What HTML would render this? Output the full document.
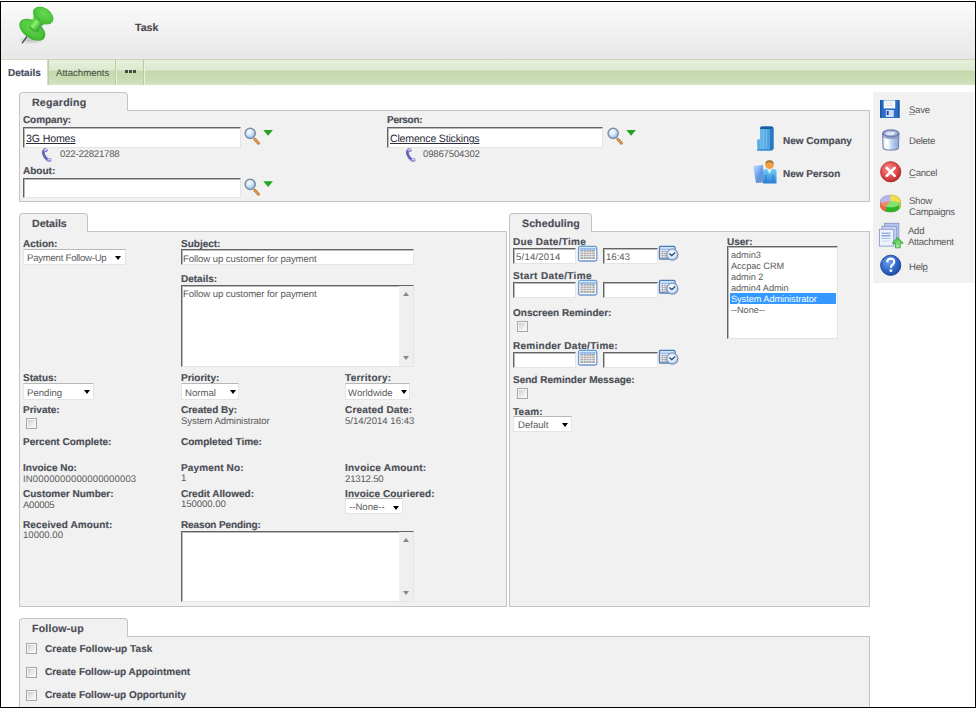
<!DOCTYPE html>
<html><head><meta charset="utf-8">
<style>
html,body{margin:0;padding:0;background:#fff;width:977px;height:710px;overflow:hidden}
body{position:relative;font-family:"Liberation Sans",sans-serif;color:#4b4b4b;text-rendering:geometricPrecision}
.a{position:absolute}
.t{position:absolute;font-size:10px;line-height:10px;white-space:nowrap}
.b{font-weight:bold;color:#4a4d55;-webkit-text-stroke:0.15px #4a4d55}
.v{color:#5a5a5a;font-size:9.6px}
#frame{position:absolute;left:0;top:1px;width:974px;height:705px;border:1px solid #000;z-index:10}
#hdr{position:absolute;left:1px;top:2px;width:974px;height:57px;background:linear-gradient(#fbfbfb,#e7e7e7)}
#tabbar{position:absolute;left:1px;top:59px;width:974px;height:26px;border-top:1px solid #c9d6bb;box-sizing:border-box;
 background:linear-gradient(#e6efdb 0,#dde9cf 40%,#c5d8ad 44%,#c9dcb3 75%,#d3e4c1 100%)}
.ptab{position:absolute;background:#f1f1f1;border:1px solid #c4c4c4;border-bottom:none;border-radius:4px 4px 0 0;box-sizing:border-box}
.panel{position:absolute;background:#f1f1f1;border:1px solid #c4c4c4;box-sizing:border-box}
.pt{position:absolute;font-size:10.6px;line-height:11px;font-weight:bold;color:#4a4d55;white-space:nowrap;-webkit-text-stroke:0.15px #4a4d55}
.inp{position:absolute;background:#fff;box-sizing:border-box;border-top:1px solid #646464;border-left:1px solid #646464;border-right:1px solid #e4e4e4;border-bottom:1px solid #e4e4e4;box-shadow:inset 1px 1px 0 #b8b8b8}
.sel{position:absolute;background:#fff;box-sizing:border-box;border:1px solid #e4e4e4;border-top-color:#b8b8b8}
.arr{position:absolute;width:0;height:0;border-left:3px solid transparent;border-right:3px solid transparent;border-top:4px solid #000}
.rb{font-size:9.6px;letter-spacing:-0.3px;color:#5a5a5a}
.rb u{text-decoration-color:#9a9a9a}
.cb{position:absolute;width:11px;height:11px;box-sizing:border-box;border:1px solid #a6a6a6;background:linear-gradient(135deg,#bfc2c6 0%,#e6e7e9 50%,#fbfbfb 90%);box-shadow:inset 0 0 0 1px #f6f6f6}
</style></head><body>
<div id="frame"></div>
<div id="hdr"></div>
<div id="tabbar"></div>
<!-- pin icon -->
<svg class="a" style="left:10px;top:2px" width="60" height="48" viewBox="0 0 60 48">
 <defs>
  <radialGradient id="psh" cx="0.5" cy="0.5" r="0.5"><stop offset="0" stop-color="#000" stop-opacity="0.22"/><stop offset="1" stop-color="#000" stop-opacity="0"/></radialGradient>
  <linearGradient id="shaft" gradientUnits="userSpaceOnUse" x1="19.5" y1="23.5" x2="27.5" y2="29.5"><stop offset="0" stop-color="#5ccf46"/><stop offset="0.35" stop-color="#88f466"/><stop offset="1" stop-color="#2f9a3a"/></linearGradient>
  <radialGradient id="capt" cx="0.45" cy="0.4" r="0.7"><stop offset="0" stop-color="#66d84f"/><stop offset="1" stop-color="#48bf3a"/></radialGradient>
  <radialGradient id="capb" cx="0.4" cy="0.45" r="0.7"><stop offset="0" stop-color="#62d64c"/><stop offset="1" stop-color="#44bb36"/></radialGradient>
 </defs>
 <ellipse cx="21" cy="38" rx="13" ry="4.5" fill="url(#psh)"/>
 <path d="M17 34.5 L12.3 40.8" stroke="#4a4a55" stroke-width="1.4" stroke-linecap="round"/>
 <ellipse cx="22.3" cy="27.8" rx="14.6" ry="8.8" transform="rotate(35 22.3 27.8)" fill="#40b534"/>
 <ellipse cx="22" cy="27.3" rx="13" ry="7.2" transform="rotate(35 22 27.3)" fill="url(#capb)"/>
 <ellipse cx="24.2" cy="26" rx="6" ry="3.6" transform="rotate(35 24.2 26)" fill="#3fae38" opacity="0.7"/>
 <path d="M27.5 29.8 L19 23.5 Q23 19.5 23.8 12.5 L36 21.5 Q29.5 23.5 27.5 29.8 Z" fill="url(#shaft)"/>
 <ellipse cx="33.2" cy="13.6" rx="11.3" ry="7.6" transform="rotate(35 33.2 13.6)" fill="#46be38"/>
 <ellipse cx="33.8" cy="12.8" rx="9.6" ry="6" transform="rotate(35 33.8 12.8)" fill="url(#capt)"/>
</svg>
<div class="t b" style="left:135px;top:23px;font-size:10.6px;line-height:11px;color:#4a4a4a">Task</div>
<!-- top tabs -->
<div class="a" style="left:1px;top:59px;width:47px;height:26px;background:#fff;border-top:1px solid #d4ddc9;box-sizing:border-box"></div>
<div class="a" style="left:47px;top:59px;width:1px;height:26px;background:#d2dcc6"></div>
<div class="a" style="left:48px;top:60px;width:1px;height:25px;background:#bccda9"></div>
<div class="a" style="left:115px;top:60px;width:1px;height:25px;background:#b9cba5"></div>
<div class="a" style="left:116px;top:60px;width:1px;height:25px;background:#e8f0de"></div>
<div class="a" style="left:143px;top:60px;width:1px;height:25px;background:#b9cba5"></div>
<div class="a" style="left:144px;top:60px;width:1px;height:25px;background:#e8f0de"></div>
<div class="t b" style="left:8px;top:69px;color:#3e4a5e">Details</div>
<div class="t" style="left:56px;top:69px;font-size:9.6px;color:#3f4a3f">Attachments</div>
<div class="a" style="left:125px;top:70px;width:3px;height:3px;background:#474747"></div>
<div class="a" style="left:129px;top:70px;width:3px;height:3px;background:#474747"></div>
<div class="a" style="left:133px;top:70px;width:3px;height:3px;background:#474747"></div>
<!-- ============ REGARDING ============ -->
<div class="panel" style="left:19px;top:110px;width:851px;height:92px"></div>
<div class="ptab" style="left:19px;top:92px;width:109px;height:19px"></div>
<div class="pt" style="left:32px;top:98px;letter-spacing:0.22px">Regarding</div>
<div class="t b" style="left:23px;top:116px;letter-spacing:-0.1px">Company:</div>
<div class="inp" style="left:23px;top:127px;width:218px;height:21px"></div>
<div class="t" style="left:26px;top:134px;font-size:10.6px;color:#2b2b3a;text-decoration:underline;letter-spacing:-0.14px">3G Homes</div>
<div class="t v" style="left:60px;top:150px;letter-spacing:-0.2px">022-22821788</div>
<div class="t b" style="left:23px;top:167px">About:</div>
<div class="inp" style="left:23px;top:178px;width:218px;height:20px"></div>
<div class="t b" style="left:387px;top:116px;letter-spacing:-0.28px">Person:</div>
<div class="inp" style="left:387px;top:127px;width:216px;height:21px"></div>
<div class="t" style="left:390px;top:134px;font-size:10.6px;color:#2b2b3a;text-decoration:underline;letter-spacing:-0.2px">Clemence Stickings</div>
<div class="t v" style="left:423px;top:150px;letter-spacing:-0.18px">09867504302</div>
<div class="t b" style="left:783px;top:137px">New Company</div>
<div class="t b" style="left:783px;top:170px">New Person</div>
<!-- ============ DETAILS ============ -->
<div class="panel" style="left:19px;top:231px;width:488px;height:376px"></div>
<div class="ptab" style="left:19px;top:213px;width:69px;height:19px"></div>
<div class="pt" style="left:32px;top:219px">Details</div>
<div class="t b" style="left:23px;top:240px">Action:</div>
<div class="sel" style="left:23px;top:249px;width:103px;height:16px"></div>
<div class="t v" style="left:27px;top:254px;letter-spacing:-0.25px">Payment Follow-Up</div>
<div class="arr" style="left:115px;top:256px"></div>
<div class="t b" style="left:181px;top:240px">Subject:</div>
<div class="inp" style="left:181px;top:249px;width:233px;height:16px"></div>
<div class="t v" style="left:183px;top:255px;letter-spacing:-0.1px">Follow up customer for payment</div>
<div class="t b" style="left:181px;top:275px">Details:</div>
<div class="inp" style="left:181px;top:285px;width:233px;height:82px"></div>
<div class="a" style="left:399px;top:286px;width:14px;height:80px;background:#efefef"></div>
<div class="t v" style="left:183px;top:290px;letter-spacing:-0.1px">Follow up customer for payment</div>
<div class="t b" style="left:23px;top:374px">Status:</div>
<div class="sel" style="left:23px;top:383px;width:71px;height:17px"></div>
<div class="t v" style="left:27px;top:389px">Pending</div>
<div class="arr" style="left:84px;top:390px"></div>
<div class="t b" style="left:181px;top:374px">Priority:</div>
<div class="sel" style="left:181px;top:383px;width:58px;height:17px"></div>
<div class="t v" style="left:185px;top:389px">Normal</div>
<div class="arr" style="left:230px;top:390px"></div>
<div class="t b" style="left:345px;top:374px;letter-spacing:0.26px">Territory:</div>
<div class="sel" style="left:345px;top:383px;width:65px;height:17px"></div>
<div class="t v" style="left:348px;top:389px">Worldwide</div>
<div class="arr" style="left:401px;top:390px"></div>
<div class="t b" style="left:23px;top:406px">Private:</div>
<div class="cb" style="left:26px;top:418px"></div>
<div class="t b" style="left:181px;top:406px">Created By:</div>
<div class="t v" style="left:181px;top:417px;letter-spacing:-0.1px">System Administrator</div>
<div class="t b" style="left:345px;top:406px;letter-spacing:0.18px">Created Date:</div>
<div class="t v" style="left:345px;top:417px">5/14/2014 16:43</div>
<div class="t b" style="left:23px;top:438px">Percent Complete:</div>
<div class="t b" style="left:181px;top:438px">Completed Time:</div>
<div class="t b" style="left:23px;top:464px">Invoice No:</div>
<div class="t v" style="left:23px;top:475px;letter-spacing:0.11px">IN0000000000000000003</div>
<div class="t b" style="left:181px;top:464px;letter-spacing:0.14px">Payment No:</div>
<div class="t v" style="left:181px;top:474px">1</div>
<div class="t b" style="left:345px;top:464px;letter-spacing:0.23px">Invoice Amount:</div>
<div class="t v" style="left:345px;top:475px;letter-spacing:-0.19px">21312.50</div>
<div class="t b" style="left:23px;top:490px">Customer Number:</div>
<div class="t v" style="left:23px;top:501px;letter-spacing:-0.3px">A00005</div>
<div class="t b" style="left:181px;top:490px">Credit Allowed:</div>
<div class="t v" style="left:181px;top:500px;letter-spacing:-0.07px">150000.00</div>
<div class="t b" style="left:345px;top:490px;letter-spacing:0.1px">Invoice Couriered:</div>
<div class="sel" style="left:345px;top:498px;width:58px;height:16px"></div>
<div class="t v" style="left:349px;top:503px">--None--</div>
<div class="arr" style="left:393px;top:506px"></div>
<div class="t b" style="left:23px;top:521px;letter-spacing:0.12px">Received Amount:</div>
<div class="t v" style="left:23px;top:531px">10000.00</div>
<div class="t b" style="left:181px;top:521px;letter-spacing:-0.13px">Reason Pending:</div>
<div class="inp" style="left:181px;top:531px;width:233px;height:71px"></div>
<div class="a" style="left:399px;top:532px;width:14px;height:69px;background:#efefef"></div>
<!-- ============ SCHEDULING ============ -->
<div class="panel" style="left:509px;top:231px;width:361px;height:376px"></div>
<div class="ptab" style="left:509px;top:213px;width:83px;height:19px"></div>
<div class="pt" style="left:522px;top:219px;letter-spacing:0.08px">Scheduling</div>
<div class="t b" style="left:513px;top:238px;letter-spacing:0.29px">Due Date/Time</div>
<div class="inp" style="left:513px;top:248px;width:63px;height:16px"></div>
<div class="t v" style="left:516px;top:253px;letter-spacing:0.2px">5/14/2014</div>
<div class="inp" style="left:603px;top:248px;width:55px;height:16px"></div>
<div class="t v" style="left:606px;top:253px">16:43</div>
<div class="t b" style="left:513px;top:272px;letter-spacing:0.39px">Start Date/Time</div>
<div class="inp" style="left:513px;top:282px;width:63px;height:16px"></div>
<div class="inp" style="left:603px;top:282px;width:55px;height:16px"></div>
<div class="t b" style="left:513px;top:309px">Onscreen Reminder:</div>
<div class="cb" style="left:517px;top:321px"></div>
<div class="t b" style="left:513px;top:342px;letter-spacing:0.27px">Reminder Date/Time:</div>
<div class="inp" style="left:513px;top:352px;width:63px;height:16px"></div>
<div class="inp" style="left:603px;top:352px;width:55px;height:16px"></div>
<div class="t b" style="left:513px;top:376px">Send Reminder Message:</div>
<div class="cb" style="left:517px;top:388px"></div>
<div class="t b" style="left:513px;top:408px;letter-spacing:0.24px">Team:</div>
<div class="sel" style="left:513px;top:416px;width:59px;height:16px"></div>
<div class="t v" style="left:518px;top:421px">Default</div>
<div class="arr" style="left:562px;top:423px"></div>
<div class="t b" style="left:727px;top:238px">User:</div>
<div class="inp" style="left:727px;top:246px;width:111px;height:93px"></div>
<div class="a" style="left:730px;top:293px;width:106px;height:11px;background:#3399ff"></div>
<div class="t v" style="left:731px;top:250px;line-height:11px;font-size:9.2px;letter-spacing:-0.05px">admin3<br>Accpac CRM<br>admin 2<br>admin4 Admin<br><span style="color:#fff">System Administrator</span><br>--None--</div>
<!-- ============ FOLLOW-UP ============ -->
<div class="panel" style="left:19px;top:636px;width:851px;height:72px"></div>
<div class="ptab" style="left:19px;top:618px;width:109px;height:19px"></div>
<div class="pt" style="left:32px;top:624px;letter-spacing:0.2px">Follow-up</div>
<div class="cb" style="left:26px;top:643px"></div>
<div class="t b" style="left:45px;top:645px;letter-spacing:0.07px">Create Follow-up Task</div>
<div class="cb" style="left:26px;top:667px"></div>
<div class="t b" style="left:45px;top:668px">Create Follow-up Appointment</div>
<div class="cb" style="left:26px;top:690px"></div>
<div class="t b" style="left:45px;top:691px">Create Follow-up Opportunity</div>
<!-- ============ ACTION BAR ============ -->
<div class="a" style="left:873px;top:92px;width:101px;height:191px;background:#f1f1f1"></div>
<div class="t rb" style="left:909px;top:106px"><u>S</u>ave</div>
<div class="t rb" style="left:909px;top:137px">Delete</div>
<div class="t rb" style="left:909px;top:169px"><u>C</u>ancel</div>
<div class="t rb" style="left:909px;top:196px;line-height:11px">Show<br>Campaigns</div>
<div class="t rb" style="left:908px;top:226px;line-height:11px">Add<br>Attachment</div>
<div class="t rb" style="left:909px;top:263px">Hel<u>p</u></div>
<!-- ============ ICONS ============ -->
<svg width="0" height="0" style="position:absolute">
 <defs>
  <radialGradient id="lens" cx="0.4" cy="0.35" r="0.65"><stop offset="0" stop-color="#ffffff"/><stop offset="0.55" stop-color="#cfe3f7"/><stop offset="1" stop-color="#8db7e3"/></radialGradient>
  <linearGradient id="cbg" x1="0" y1="0" x2="1" y2="1"><stop offset="0" stop-color="#c9cdd2"/><stop offset="1" stop-color="#ffffff"/></linearGradient>
  <linearGradient id="bfront" x1="0" y1="0" x2="1" y2="0"><stop offset="0" stop-color="#69b9ea"/><stop offset="1" stop-color="#4a9fdc"/></linearGradient>
  <linearGradient id="trash" x1="0" y1="0" x2="1" y2="0"><stop offset="0" stop-color="#e8eef8"/><stop offset="0.3" stop-color="#ffffff"/><stop offset="0.6" stop-color="#b4cfee"/><stop offset="1" stop-color="#8aa6d6"/></linearGradient>
  <radialGradient id="redc" cx="0.4" cy="0.35" r="0.7"><stop offset="0" stop-color="#f58a8a"/><stop offset="0.6" stop-color="#e34a4a"/><stop offset="1" stop-color="#b82828"/></radialGradient>
  <radialGradient id="bluec" cx="0.4" cy="0.35" r="0.7"><stop offset="0" stop-color="#6ea0ec"/><stop offset="0.6" stop-color="#2f66cc"/><stop offset="1" stop-color="#1d4a9e"/></radialGradient>
  <radialGradient id="clockg" cx="0.45" cy="0.4" r="0.6"><stop offset="0" stop-color="#ffffff"/><stop offset="0.7" stop-color="#cfe6fa"/><stop offset="1" stop-color="#8fb2dc"/></radialGradient>
  <linearGradient id="body" x1="0" y1="0" x2="0" y2="1"><stop offset="0" stop-color="#70d0f8"/><stop offset="1" stop-color="#2c7fd8"/></linearGradient>
  <linearGradient id="mon" x1="0" y1="0" x2="1" y2="1"><stop offset="0" stop-color="#cfe4fb"/><stop offset="0.6" stop-color="#5d94e6"/><stop offset="1" stop-color="#8a9ab0"/></linearGradient>
  <linearGradient id="arrg" x1="0" y1="0" x2="0" y2="1"><stop offset="0" stop-color="#3fc23a"/><stop offset="1" stop-color="#a6eea0"/></linearGradient>
 </defs>
</svg>
<!-- magnifiers + triangles -->
<svg class="a" style="left:242px;top:125px" width="34" height="22" viewBox="0 0 34 22">
 <line x1="12.8" y1="14.2" x2="16.5" y2="18.3" stroke="#b7772f" stroke-width="2.8" stroke-linecap="round"/>
 <line x1="13" y1="14.4" x2="16.3" y2="18" stroke="#e4a358" stroke-width="1.3" stroke-linecap="round"/>
 <circle cx="8.2" cy="8.3" r="5.1" fill="url(#lens)" stroke="#7d8ea6" stroke-width="1.5"/>
 <polygon points="21.3,5 30.9,5 26.1,10.8" fill="#21a521"/>
</svg>
<svg class="a" style="left:242px;top:176px" width="34" height="22" viewBox="0 0 34 22">
 <line x1="12.8" y1="14.2" x2="16.5" y2="18.3" stroke="#b7772f" stroke-width="2.8" stroke-linecap="round"/>
 <line x1="13" y1="14.4" x2="16.3" y2="18" stroke="#e4a358" stroke-width="1.3" stroke-linecap="round"/>
 <circle cx="8.2" cy="8.3" r="5.1" fill="url(#lens)" stroke="#7d8ea6" stroke-width="1.5"/>
 <polygon points="21.3,5.3 30.9,5.3 26.1,11.1" fill="#21a521"/>
</svg>
<svg class="a" style="left:605px;top:125px" width="34" height="22" viewBox="0 0 34 22">
 <line x1="12.8" y1="14.2" x2="16.5" y2="18.3" stroke="#b7772f" stroke-width="2.8" stroke-linecap="round"/>
 <line x1="13" y1="14.4" x2="16.3" y2="18" stroke="#e4a358" stroke-width="1.3" stroke-linecap="round"/>
 <circle cx="8.2" cy="8.3" r="5.1" fill="url(#lens)" stroke="#7d8ea6" stroke-width="1.5"/>
 <polygon points="21.3,5 30.9,5 26.1,10.8" fill="#21a521"/>
</svg>
<!-- phones -->
<svg class="a" style="left:40px;top:147px" width="14" height="16" viewBox="0 0 14 16">
 <path d="M4.4 3 C2.4 4.6 3 8.8 7.6 12.8" stroke="#6464b4" stroke-width="2.8" fill="none" stroke-linecap="round"/>
 <ellipse cx="5.4" cy="3.2" rx="2.4" ry="2" fill="#8686d2"/>
 <ellipse cx="9.2" cy="13" rx="2.5" ry="2" fill="#9090d8"/>
 <ellipse cx="5.6" cy="2.8" rx="1.2" ry="0.8" fill="#e4e4fa"/>
 <ellipse cx="9.4" cy="12.6" rx="1.3" ry="0.8" fill="#dcdcf6"/>
</svg>
<svg class="a" style="left:404px;top:147px" width="14" height="16" viewBox="0 0 14 16">
 <path d="M4.4 3 C2.4 4.6 3 8.8 7.6 12.8" stroke="#6464b4" stroke-width="2.8" fill="none" stroke-linecap="round"/>
 <ellipse cx="5.4" cy="3.2" rx="2.4" ry="2" fill="#8686d2"/>
 <ellipse cx="9.2" cy="13" rx="2.5" ry="2" fill="#9090d8"/>
 <ellipse cx="5.6" cy="2.8" rx="1.2" ry="0.8" fill="#e4e4fa"/>
 <ellipse cx="9.4" cy="12.6" rx="1.3" ry="0.8" fill="#dcdcf6"/>
</svg>
<!-- building -->
<svg class="a" style="left:754px;top:124px" width="24" height="30" viewBox="0 0 24 30">
 <path d="M6 4 Q6 2.5 8 2.5 L17 2.5 Q19.5 2.5 19.5 4.5 L19.5 25 L18 26.5 L6 26.5 Z" fill="#2f80cc"/>
 <rect x="6" y="5" width="10" height="21" fill="url(#bfront)"/>
 <path d="M16 5 L19.5 4 L19.5 25 L16 26.5Z" fill="#2c78c4"/>
 <path d="M7 2.5 L18 2.5 L19.5 4 L16 5 L6 5 Z" fill="#1c5aa2"/>
 <path d="M3 16 L6 15 L6 26.5 L3.5 25.5 Z" fill="#5aacE4"/>
 <rect x="3" y="25" width="13" height="1.6" fill="#3d8fd6"/>
 <line x1="9.5" y1="6" x2="9.5" y2="24" stroke="#8ccaf0" stroke-width="0.6"/>
 <line x1="12.5" y1="6" x2="12.5" y2="24" stroke="#8ccaf0" stroke-width="0.6"/>
</svg>
<!-- person -->
<svg class="a" style="left:751px;top:158px" width="28" height="28" viewBox="0 0 28 28">
 <path d="M2 8 L12 7 L13 24.5 L5 25 Z" fill="url(#mon)"/>
 <path d="M12 14 Q12 11 15 11 L23 11 Q25.5 11 25.5 14 L25.5 25.5 L12 25.5 Z" fill="url(#body)"/>
 <path d="M16 11 L18.5 16 L21 11 Z" fill="#d8f4ff"/>
 <line x1="15" y1="17" x2="15" y2="25" stroke="#2a78cc" stroke-width="1"/>
 <line x1="22" y1="17" x2="22" y2="25" stroke="#2a78cc" stroke-width="1"/>
 <circle cx="18.5" cy="6.8" r="4.3" fill="#f2a040"/>
 <path d="M14.2 6 Q14.5 2 18.5 2.2 Q22.8 2 22.8 6.5 Q21 4 18.5 4.3 Q16 4.2 14.2 6Z" fill="#a87838"/>
</svg>
<!-- save -->
<svg class="a" style="left:879px;top:99px" width="22" height="20" viewBox="0 0 22 20">
 <path d="M1.2 1 L20 1 L20.5 1.6 L20.5 18.8 L19.5 19 L2 19 L1 18 Z" fill="#2b6ec8"/>
 <rect x="1" y="1" width="1.6" height="18" fill="#1f56a8"/>
 <rect x="18.8" y="1.5" width="1.7" height="17.5" fill="#1f56a8"/>
 <rect x="4.7" y="1.4" width="11.5" height="8" fill="#f8fafc"/>
 <line x1="6.5" y1="4" x2="14" y2="4" stroke="#c8ccd4" stroke-width="0.6"/>
 <line x1="6.5" y1="6.5" x2="14" y2="6.5" stroke="#c8ccd4" stroke-width="0.6"/>
 <rect x="6.8" y="11" width="8" height="7" fill="#c8daf6"/>
 <rect x="7.8" y="12" width="1.8" height="4" fill="#2a3f9a"/>
</svg>
<!-- delete -->
<svg class="a" style="left:880px;top:128px" width="22" height="24" viewBox="0 0 22 24">
 <path d="M2.6 5.5 L18.9 5.5 L18.4 19.8 Q18 22 10.8 22 Q3.6 22 3.1 19.8 Z" fill="url(#trash)" stroke="#7080a8" stroke-width="1.1"/>
 <path d="M2.8 7.5 Q10.8 11.5 18.8 7.5 L18.7 9.5 Q10.8 13 2.9 9.5 Z" fill="#8696c4" opacity="0.8"/>
 <ellipse cx="10.8" cy="5.4" rx="8.7" ry="4.1" fill="#6f7db0"/>
 <ellipse cx="10.8" cy="5.2" rx="6.9" ry="2.8" fill="#a9b4d6"/>
 <ellipse cx="10" cy="5.6" rx="4.2" ry="1.5" fill="#dfe5f3"/>
 <ellipse cx="13.2" cy="5.1" rx="1.6" ry="1" fill="#eef1f8"/>
</svg>
<!-- cancel -->
<svg class="a" style="left:879px;top:161px" width="23" height="22" viewBox="0 0 23 22">
 <circle cx="11.7" cy="10.8" r="10.1" fill="url(#redc)" stroke="#a82a2a" stroke-width="0.9"/>
 <path d="M7.7 6.8 L15.7 14.8 M15.7 6.8 L7.7 14.8" stroke="#ffffff" stroke-width="2.6" stroke-linecap="round"/>
</svg>
<!-- pie -->
<svg class="a" style="left:879px;top:194px" width="23" height="20" viewBox="0 0 23 20">
 <path d="M1.2 7 L1.2 12 A10.3 6.3 0 0 0 21.8 12 L21.8 7 Z" fill="#2ab52a"/>
 <path d="M1.2 7 L1.2 12 A10.3 6.3 0 0 0 7 17.4 L7 12.5 Z" fill="#f06a3a"/>
 <path d="M20 9.5 L21.8 7 L21.8 12 A10.3 6.3 0 0 1 20 14 Z" fill="#e8c830"/>
 <ellipse cx="11.5" cy="7" rx="10.3" ry="6.3" fill="#b8b8ee"/>
 <path d="M11.5 7 L11.5 0.7 A10.3 6.3 0 0 1 21.5 8.5 Z" fill="#f4de48"/>
 <path d="M11.5 7 L21.5 8.5 A10.3 6.3 0 0 1 7 12.6 Z" fill="#7ee46a"/>
 <path d="M11.5 7 L7 12.6 A10.3 6.3 0 0 1 1.5 9 Z" fill="#f08a6a"/>
 <ellipse cx="11.5" cy="9.5" rx="10.3" ry="8.4" fill="none" stroke="#8a7a40" stroke-width="0.4" opacity="0.5"/>
</svg>
<!-- add attachment -->
<svg class="a" style="left:877px;top:222px" width="28" height="27" viewBox="0 0 28 27">
 <rect x="7.5" y="1.3" width="14.3" height="17" fill="#b8c4ee" stroke="#8a98c8" stroke-width="0.9"/>
 <rect x="5" y="4.3" width="14.3" height="17" fill="#c8d2f4" stroke="#8a98c8" stroke-width="0.9"/>
 <rect x="2.4" y="7.3" width="14.3" height="16.8" fill="#eef2fe" stroke="#8a98c8" stroke-width="0.9"/>
 <line x1="4.5" y1="11.2" x2="13.5" y2="11.2" stroke="#7ba6e0" stroke-width="1.2"/>
 <line x1="4.5" y1="13.8" x2="13.5" y2="13.8" stroke="#5a7ccc" stroke-width="1"/>
 <line x1="4.5" y1="16.4" x2="13.5" y2="16.4" stroke="#a8c4e8" stroke-width="1.2"/>
 <line x1="4.5" y1="19" x2="13.5" y2="19" stroke="#d0dcf0" stroke-width="1.2"/>
 <path d="M20.7 15.5 L26.2 21.2 L23.2 21.2 L23.2 25.8 L18.4 25.8 L18.4 21.2 L15.2 21.2 Z" fill="url(#arrg)" stroke="#2a9a2a" stroke-width="0.8"/>
</svg>
<!-- help -->
<svg class="a" style="left:879px;top:254px" width="23" height="23" viewBox="0 0 23 23">
 <circle cx="11.7" cy="11.3" r="10.1" fill="url(#bluec)" stroke="#1e4690" stroke-width="0.9"/>
 <path d="M8.2 8.2 Q8.4 4.7 11.8 4.7 Q15.3 4.8 15.2 7.9 Q15.1 10 13 11.2 Q11.9 11.9 11.9 13.8" stroke="#fff" stroke-width="2.2" fill="none"/>
 <rect x="10.6" y="15.4" width="2.6" height="2.4" fill="#fff"/>
</svg>
<!-- calendars -->
<svg class="a cal" style="left:577px;top:245px" width="22" height="18" viewBox="0 0 22 18">
 <rect x="1.6" y="1.4" width="18.2" height="14.6" rx="1.8" fill="#fafcff" stroke="#7098d0" stroke-width="1.3"/>
 <rect x="2.4" y="2" width="16.6" height="1.4" fill="#c8f0fc"/>
 <rect x="2.6" y="3.2" width="16.2" height="1.6" fill="#88b0e8"/>
 <rect x="3.6" y="5" width="14.2" height="9" fill="#a4a4a4"/>
 <path d="M3.6 7.2 H17.8 M3.6 9.4 H17.8 M3.6 11.6 H17.8" stroke="#f4f4f4" stroke-width="0.8"/>
 <path d="M6.4 5 V14 M9.2 5 V14 M12 5 V14 M14.8 5 V14" stroke="#e8e8e8" stroke-width="0.8"/>
</svg>
<svg class="a cal" style="left:577px;top:279px" width="22" height="18" viewBox="0 0 22 18">
 <rect x="1.6" y="1.4" width="18.2" height="14.6" rx="1.8" fill="#fafcff" stroke="#7098d0" stroke-width="1.3"/>
 <rect x="2.4" y="2" width="16.6" height="1.4" fill="#c8f0fc"/>
 <rect x="2.6" y="3.2" width="16.2" height="1.6" fill="#88b0e8"/>
 <rect x="3.6" y="5" width="14.2" height="9" fill="#a4a4a4"/>
 <path d="M3.6 7.2 H17.8 M3.6 9.4 H17.8 M3.6 11.6 H17.8" stroke="#f4f4f4" stroke-width="0.8"/>
 <path d="M6.4 5 V14 M9.2 5 V14 M12 5 V14 M14.8 5 V14" stroke="#e8e8e8" stroke-width="0.8"/>
</svg>
<svg class="a cal" style="left:577px;top:349px" width="22" height="18" viewBox="0 0 22 18">
 <rect x="1.6" y="1.4" width="18.2" height="14.6" rx="1.8" fill="#fafcff" stroke="#7098d0" stroke-width="1.3"/>
 <rect x="2.4" y="2" width="16.6" height="1.4" fill="#c8f0fc"/>
 <rect x="2.6" y="3.2" width="16.2" height="1.6" fill="#88b0e8"/>
 <rect x="3.6" y="5" width="14.2" height="9" fill="#a4a4a4"/>
 <path d="M3.6 7.2 H17.8 M3.6 9.4 H17.8 M3.6 11.6 H17.8" stroke="#f4f4f4" stroke-width="0.8"/>
 <path d="M6.4 5 V14 M9.2 5 V14 M12 5 V14 M14.8 5 V14" stroke="#e8e8e8" stroke-width="0.8"/>
</svg>
<!-- clocks -->
<svg class="a" style="left:657px;top:245px" width="24" height="18" viewBox="0 0 24 18">
 <rect x="2.5" y="1.5" width="15.5" height="12.5" rx="1" fill="#f4f8ff" stroke="#4e78b8" stroke-width="1.4"/>
 <rect x="3.4" y="2.4" width="13.8" height="1.2" fill="#c8f0fc"/>
 <rect x="3.4" y="3.6" width="13.8" height="1.2" fill="#8ab0e6"/>
 <path d="M4 6.5 H10 M4 8.5 H10 M4 10.5 H10 M4 12.4 H10" stroke="#aaa" stroke-width="0.8"/>
 <path d="M5.5 5 V13 M8 5 V13" stroke="#aaa" stroke-width="0.8"/>
 <circle cx="15.3" cy="9.6" r="5.6" fill="url(#clockg)" stroke="#7890b8" stroke-width="1.2"/>
 <path d="M12.3 8.6 L14.8 10.6 L18.2 7.5" stroke="#3a4a6a" stroke-width="1.3" fill="none"/>
</svg>
<svg class="a" style="left:657px;top:279px" width="24" height="18" viewBox="0 0 24 18">
 <rect x="2.5" y="1.5" width="15.5" height="12.5" rx="1" fill="#f4f8ff" stroke="#4e78b8" stroke-width="1.4"/>
 <rect x="3.4" y="2.4" width="13.8" height="1.2" fill="#c8f0fc"/>
 <rect x="3.4" y="3.6" width="13.8" height="1.2" fill="#8ab0e6"/>
 <path d="M4 6.5 H10 M4 8.5 H10 M4 10.5 H10 M4 12.4 H10" stroke="#aaa" stroke-width="0.8"/>
 <path d="M5.5 5 V13 M8 5 V13" stroke="#aaa" stroke-width="0.8"/>
 <circle cx="15.3" cy="9.6" r="5.6" fill="url(#clockg)" stroke="#7890b8" stroke-width="1.2"/>
 <path d="M12.3 8.6 L14.8 10.6 L18.2 7.5" stroke="#3a4a6a" stroke-width="1.3" fill="none"/>
</svg>
<svg class="a" style="left:657px;top:349px" width="24" height="18" viewBox="0 0 24 18">
 <rect x="2.5" y="1.5" width="15.5" height="12.5" rx="1" fill="#f4f8ff" stroke="#4e78b8" stroke-width="1.4"/>
 <rect x="3.4" y="2.4" width="13.8" height="1.2" fill="#c8f0fc"/>
 <rect x="3.4" y="3.6" width="13.8" height="1.2" fill="#8ab0e6"/>
 <path d="M4 6.5 H10 M4 8.5 H10 M4 10.5 H10 M4 12.4 H10" stroke="#aaa" stroke-width="0.8"/>
 <path d="M5.5 5 V13 M8 5 V13" stroke="#aaa" stroke-width="0.8"/>
 <circle cx="15.3" cy="9.6" r="5.6" fill="url(#clockg)" stroke="#7890b8" stroke-width="1.2"/>
 <path d="M12.3 8.6 L14.8 10.6 L18.2 7.5" stroke="#3a4a6a" stroke-width="1.3" fill="none"/>
</svg>
<!-- scroll arrows -->
<div class="a" style="left:403px;top:292px;width:0;height:0;border-left:3.5px solid transparent;border-right:3.5px solid transparent;border-bottom:4px solid #888"></div>
<div class="a" style="left:403px;top:356px;width:0;height:0;border-left:3.5px solid transparent;border-right:3.5px solid transparent;border-top:4px solid #888"></div>
<div class="a" style="left:403px;top:538px;width:0;height:0;border-left:3.5px solid transparent;border-right:3.5px solid transparent;border-bottom:4px solid #888"></div>
<div class="a" style="left:403px;top:591px;width:0;height:0;border-left:3.5px solid transparent;border-right:3.5px solid transparent;border-top:4px solid #888"></div>
</body></html>
